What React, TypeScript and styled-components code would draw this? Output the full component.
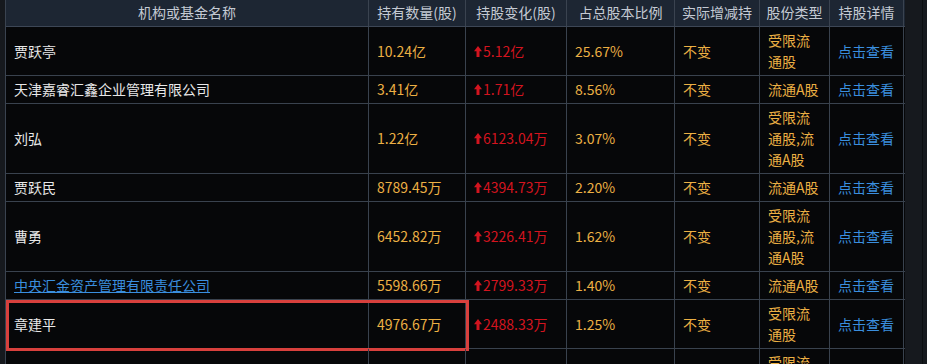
import React, { FC } from 'react';
import styled, { createGlobalStyle, css } from 'styled-components';

const COLUMNS = '363px 97px 101px 108px 85px 70px 74px';

interface HolderRow {
  name: string;
  amount: string;
  change: string;
  ratio: string;
  action: string;
  kind: string;
  isLink?: boolean;
  isMarked?: boolean;
}

const HEADERS = ['机构或基金名称', '持有数量(股)', '持股变化(股)', '占总股本比例', '实际增减持', '股份类型', '持股详情'];

const ROWS: HolderRow[] = [
  { name: '贾跃亭', amount: '10.24亿', change: '5.12亿', ratio: '25.67%', action: '不变', kind: '受限流通股' },
  { name: '天津嘉睿汇鑫企业管理有限公司', amount: '3.41亿', change: '1.71亿', ratio: '8.56%', action: '不变', kind: '流通A股' },
  { name: '刘弘', amount: '1.22亿', change: '6123.04万', ratio: '3.07%', action: '不变', kind: '受限流通股,流通A股' },
  { name: '贾跃民', amount: '8789.45万', change: '4394.73万', ratio: '2.20%', action: '不变', kind: '流通A股' },
  { name: '曹勇', amount: '6452.82万', change: '3226.41万', ratio: '1.62%', action: '不变', kind: '受限流通股,流通A股' },
  { name: '中央汇金资产管理有限责任公司', amount: '5598.66万', change: '2799.33万', ratio: '1.40%', action: '不变', kind: '流通A股', isLink: true },
  { name: '章建平', amount: '4976.67万', change: '2488.33万', ratio: '1.25%', action: '不变', kind: '受限流通股', isMarked: true },
];

const UpArrow: FC = () => (
  <svg width="8" height="11" viewBox="0 0 8 11">
    <path d="M4 0 L8 5.2 H5.5 V11 H2.5 V5.2 H0 Z" fill="#d3141f" />
  </svg>
);

export default function App() {
  return (
    <>
      <GlobalStyle />
      <Page>
        <Table>
          <HeaderRow>
            {HEADERS.map(title => (
              <HeaderCell key={title}>{title}</HeaderCell>
            ))}
          </HeaderRow>
          {ROWS.map(row => (
            <Row key={row.name}>
              <Cell>{row.isLink ? <NameLink>{row.name}</NameLink> : <Name>{row.name}</Name>}</Cell>
              <Cell $tone="gold">{row.amount}</Cell>
              <Cell $tone="red">
                <UpArrow />
                <span>{row.change}</span>
              </Cell>
              <Cell $tone="gold">{row.ratio}</Cell>
              <Cell $tone="gold">{row.action}</Cell>
              <Cell $tone="gold">{row.kind}</Cell>
              <Cell $tone="blue">点击查看</Cell>
              {row.isMarked ? <Marker /> : null}
            </Row>
          ))}
          {/* next row, only its first type line shows above the fold */}
          <Row>
            <Cell />
            <Cell />
            <Cell />
            <Cell />
            <Cell />
            <Cell $tone="gold" $top>受限流</Cell>
            <Cell />
          </Row>
        </Table>
        <SidePanel>
          <ScrollTrack />
        </SidePanel>
      </Page>
    </>
  );
}

const GlobalStyle = createGlobalStyle`
  html, body {
    margin: 0;
    padding: 0;
    background: #16191e;
    overflow: hidden;
  }
  body {
    font-family: "Noto Sans CJK SC", "Noto Sans", sans-serif;
    font-size: 14px;
  }
`;

const Page = styled.div`
  display: flex;
  align-items: flex-start;
  height: 364px;
  padding-left: 5px;
  overflow: hidden;
`;

const Table = styled.div`
  width: 899px;
  flex-shrink: 0;
  border-left: 1px solid #3a4350;
  background-color: #060709;
`;

const HeaderRow = styled.div`
  display: grid;
  grid-template-columns: ${COLUMNS};
  background-color: #1d2633;
  border-bottom: 1px solid #3d4756;
`;

const HeaderCell = styled.div`
  box-sizing: border-box;
  border-right: 1px solid #3a4350;
  padding: 2px 4px 3px;
  line-height: 21px;
  text-align: center;
  color: #c4cad3;
  white-space: nowrap;
`;

const Row = styled.div`
  position: relative;
  display: grid;
  grid-template-columns: ${COLUMNS};
  border-bottom: 1px solid #39424e;
`;

type Tone = 'gold' | 'red' | 'blue';

const Cell = styled.div<{ $tone?: Tone; $top?: boolean }>`
  box-sizing: border-box;
  display: flex;
  align-items: ${({ $top }) => ($top ? 'flex-start' : 'center')};
  gap: 1px;
  min-height: 27px;
  padding: 3px 8px;
  line-height: 21px;
  border-right: 1px solid #39424e;
  word-break: break-all;
  color: #e6e6e6;
  ${({ $tone }) =>
    $tone === 'gold' &&
    css`
      color: #ecb044;
    `}
  ${({ $tone }) =>
    $tone === 'red' &&
    css`
      color: #d3141f;
    `}
  ${({ $tone }) =>
    $tone === 'blue' &&
    css`
      color: #3a8ede;
    `}
`;

const Name = styled.span`
  color: #e8e8e8;
`;

const NameLink = styled.a`
  color: #3a8ede;
  text-decoration: underline;
  cursor: pointer;
`;

const Marker = styled.div`
  position: absolute;
  left: 0;
  top: 0;
  bottom: -3px;
  width: 463px;
  box-sizing: border-box;
  border: 3px solid #d8403d;
  pointer-events: none;
`;

const SidePanel = styled.div`
  flex: 1;
  align-self: stretch;
  display: flex;
  justify-content: flex-end;
  padding-right: 4px;
`;

const ScrollTrack = styled.div`
  width: 1px;
  background-color: #0c0e11;
`;
